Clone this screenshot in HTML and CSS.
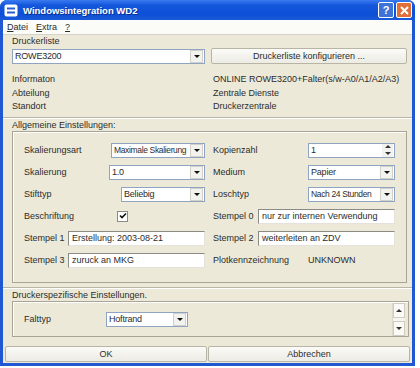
FILE: index.html
```html
<!DOCTYPE html>
<html>
<head>
<meta charset="utf-8">
<title>Windowsintegration WD2</title>
<link rel="stylesheet" href="styles.css">
</head>
<body>
<div class="window">
  <div class="titlebar">
    <svg class="app-icon" width="14" height="13" viewBox="0 0 14 13">
      <rect x="0.5" y="0.5" width="13" height="12" rx="2" fill="#fff"/>
      <rect x="3" y="3.5" width="8" height="2" fill="#2a5fd0"/>
      <rect x="3" y="7.5" width="8" height="2" fill="#2a5fd0"/>
    </svg>
    <span class="title">Windowsintegration WD2</span>
    <span class="cap-btn help">?</span>
    <span class="cap-btn close">
      <svg width="9" height="9" viewBox="0 0 9 9"><path d="M1 1L8 8M8 1L1 8" stroke="#fff" stroke-width="2"/></svg>
    </span>
  </div>
  <div class="client">
    <div class="menubar">
      <span><u>D</u>atei</span>
      <span><u>E</u>xtra</span>
      <span><u>?</u></span>
    </div>

    <div class="section-label">Druckerliste</div>
    <div class="printer-row">
      <div class="combo printer-combo"><span class="combo-text">ROWE3200</span><span class="combo-btn"></span></div>
      <div class="btn config-btn">Druckerliste konfigurieren ...</div>
    </div>
    <div class="info">
      <span>Informaton</span><span>ONLINE ROWE3200+Falter(s/w-A0/A1/A2/A3)</span>
      <span>Abteilung</span><span>Zentrale Dienste</span>
      <span>Standort</span><span>Druckerzentrale</span>
    </div>

    <div class="separator"></div>
    <div class="section-label group-label">Allgemeine Einstellungen:</div>
    <div class="group general">
      <div class="cell">
        <span>Skalierungsart</span>
        <div class="combo w94"><span class="combo-text tight">Maximale Skalierung</span><span class="combo-btn"></span></div>
      </div>
      <div class="cell">
        <span>Kopienzahl</span>
        <div class="combo w87"><span class="combo-text">1</span><span class="spin-btn"><i class="up"></i><i class="down"></i></span></div>
      </div>
      <div class="cell">
        <span>Skalierung</span>
        <div class="combo w96"><span class="combo-text">1.0</span><span class="combo-btn"></span></div>
      </div>
      <div class="cell">
        <span>Medium</span>
        <div class="combo w87"><span class="combo-text">Papier</span><span class="combo-btn"></span></div>
      </div>
      <div class="cell">
        <span>Stifttyp</span>
        <div class="combo w84"><span class="combo-text">Beliebig</span><span class="combo-btn"></span></div>
      </div>
      <div class="cell">
        <span>Loschtyp</span>
        <div class="combo w87"><span class="combo-text tight">Nach 24 Stunden</span><span class="combo-btn"></span></div>
      </div>
      <div class="cell">
        <span>Beschriftung</span>
        <span class="checkbox">
          <svg width="8" height="8" viewBox="0 0 8 8"><path d="M1 3.5L3 5.5L7 1.5" fill="none" stroke="#111" stroke-width="1.6"/></svg>
        </span>
      </div>
      <div class="cell">
        <span>Stempel 0</span>
        <div class="edit w137">nur zur internen Verwendung</div>
      </div>
      <div class="cell">
        <span>Stempel 1</span>
        <div class="edit w137">Erstellung: 2003-08-21</div>
      </div>
      <div class="cell">
        <span>Stempel 2</span>
        <div class="edit w137">weiterleiten an ZDV</div>
      </div>
      <div class="cell">
        <span>Stempel 3</span>
        <div class="edit w137">zuruck an MKG</div>
      </div>
      <div class="cell">
        <span>Plotkennzeichnung</span>
        <span class="plot-value">UNKNOWN</span>
      </div>
    </div>

    <div class="separator lower"></div>
    <div class="section-label group-label">Druckerspezifische Einstellungen.</div>
    <div class="group special">
      <div class="special-row">
        <span class="special-label">Falttyp</span>
        <div class="combo w82"><span class="combo-text">Hoftrand</span><span class="combo-btn"></span></div>
      </div>
      <div class="scrollbar">
        <span class="scroll-btn"><i class="up"></i></span>
        <span class="scroll-btn"><i class="down"></i></span>
      </div>
    </div>

    <div class="buttons">
      <div class="btn">OK</div>
      <div class="btn">Abbrechen</div>
    </div>
  </div>
</div>
</body>
</html>
```

FILE: styles.css
```css
/* Windows XP style dialog */

body
{ margin: 0;
background-color: #fff;
font-family: "Liberation Sans", Arial, sans-serif;
font-size: 9px;
color: #2c2c2c;
}

div.window
{ width: 415px;
height: 366px;
display: flex;
flex-direction: column;
background: #1f58d2;
border-radius: 7px 7px 0 0;
overflow: hidden;
}

/* Title bar */

div.titlebar
{ height: 20px;
flex: none;
display: flex;
align-items: center;
padding: 0 3px 0 4px;
background: linear-gradient(#3a7bf0 0%, #1457dc 25%, #0d4fd6 70%, #1a5ad8 100%);
}

svg.app-icon
{ margin-right: 5px;
}

span.title
{ flex: 1;
color: #fff;
font-weight: bold;
font-size: 9.5px;
text-shadow: 1px 1px 0 #0a2f90;
}

span.cap-btn
{ width: 14px;
height: 14px;
margin-left: 2px;
border: 1px solid #fff;
border-radius: 2px;
display: flex;
align-items: center;
justify-content: center;
color: #fff;
font-weight: bold;
font-size: 11px;
}

span.help
{ background: #3f72d6;
}

span.close
{ background: #e06f3c;
}

/* Client area */

div.client
{ flex: 1;
margin: 0 3px 3px 3px;
background-color: #ece9d8;
display: flex;
flex-direction: column;
}

div.client > div
{ flex: none;
}

div.menubar
{ height: 14px;
display: flex;
align-items: center;
gap: 8px;
padding-left: 4px;
background-color: #fbfbf8;
border-bottom: 1px solid #d6d3c6;
}

div.section-label
{ height: 13px;
line-height: 13px;
padding-left: 9px;
}

div.section-label.group-label
{ height: 12px;
line-height: 12px;
}

div.printer-row
{ display: flex;
align-items: center;
gap: 6px;
margin: 0 5px 0 9px;
height: 16px;
}

div.info
{ display: grid;
grid-template-columns: 201px 1fr;
grid-auto-rows: 13.5px;
line-height: 13.5px;
padding: 9px 0 0 9px;
height: 41px;
}

div.separator
{ height: 0;
margin-top: 3px;
border-top: 1px solid #b9b6a8;
border-bottom: 1px solid #fff;
}

div.separator.lower
{ margin-top: 4px;
}

/* Group boxes */

div.group
{ border: 1px solid #a8a597;
box-shadow: inset 1px 1px 0 #fff;
}

div.general
{ height: 152px;
box-sizing: border-box;
margin: 0 5px 0 9px;
padding: 7px 0 0 11px;
display: grid;
grid-template-columns: 181px 182px;
grid-auto-rows: 22px;
column-gap: 8px;
}

div.cell
{ display: flex;
align-items: center;
justify-content: space-between;
}

div.special
{ height: 36px;
box-sizing: border-box;
margin: 0 3px 0 9px;
display: flex;
align-items: center;
padding-left: 11px;
}

div.special-row
{ flex: 1;
display: flex;
align-items: center;
}

span.special-label
{ width: 82px;
}

/* Controls */

div.combo
{ height: 15px;
box-sizing: border-box;
display: flex;
align-items: center;
background-color: #fff;
border: 1px solid #8ea4c0;
}

div.printer-combo
{ width: 193px;
}

span.combo-text
{ flex: 1;
padding-left: 2px;
letter-spacing: -0.2px;
white-space: nowrap;
overflow: hidden;
}

span.combo-text.tight
{ font-size: 8.5px;
letter-spacing: -0.35px;
}

span.combo-btn
{ width: 11px;
height: 11px;
margin-right: 1px;
background: #f2f2ee;
border: 1px solid #d2d0c8;
display: flex;
align-items: center;
justify-content: center;
}

span.combo-btn:after
{ content: "";
border-left: 3px solid transparent;
border-right: 3px solid transparent;
border-top: 3px solid #111;
}

span.spin-btn
{ width: 11px;
height: 13px;
margin-right: 1px;
display: flex;
flex-direction: column;
justify-content: space-around;
align-items: center;
background: #f2f2ee;
}

i.up
{ border-left: 3px solid transparent;
border-right: 3px solid transparent;
border-bottom: 3px solid #333;
}

i.down
{ border-left: 3px solid transparent;
border-right: 3px solid transparent;
border-top: 3px solid #333;
}

div.w94 { width: 94px; }
div.w96 { width: 96px; }
div.w84 { width: 84px; }
div.w87 { width: 87px; }
div.w82 { width: 82px; }
div.w137 { width: 137px; }

div.edit
{ height: 15px;
box-sizing: border-box;
line-height: 13px;
padding-left: 3px;
background-color: #fff;
border-top: 1px solid #8a8a86;
border-left: 1px solid #8a8a86;
border-right: 1px solid #e4e2da;
border-bottom: 1px solid #e4e2da;
white-space: nowrap;
}

span.checkbox
{ width: 9px;
height: 9px;
margin-right: 77px;
background-color: #fff;
border: 1px solid #8a8a86;
display: flex;
align-items: center;
justify-content: center;
}

span.plot-value
{ width: 87px;
}

div.scrollbar
{ width: 12px;
height: 33px;
margin-right: 3px;
display: flex;
flex-direction: column;
justify-content: space-between;
background-color: #f5f4ee;
border-left: 1px solid #dcd9cc;
}

span.scroll-btn
{ height: 13px;
display: flex;
align-items: center;
justify-content: center;
background: #fbfaf6;
border: 1px solid #cfccbf;
}

div.btn
{ box-sizing: border-box;
display: flex;
align-items: center;
justify-content: center;
background: linear-gradient(#fbfbf8, #ecebe4);
border: 1px solid #b8b5a7;
border-radius: 2px;
}

div.config-btn
{ width: 196px;
height: 16px;
}

div.buttons
{ margin: 9px 2px 0 2px;
display: flex;
gap: 1px;
height: 16px;
}

div.buttons div.btn
{ flex: 1;
}
```
